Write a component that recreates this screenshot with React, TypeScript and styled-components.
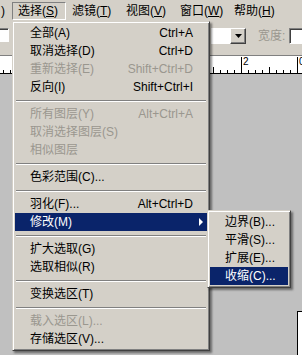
import React from 'react'
import styled, { createGlobalStyle } from 'styled-components'

const FONT = `"Liberation Sans", "Noto Sans CJK SC", sans-serif`

const GlobalStyle = createGlobalStyle`
  html, body {
    margin: 0;
    padding: 0;
  }
  body {
    background: #c0c0c0;
    font-family: ${FONT};
  }
`

const Screen = styled.div`
  position: relative;
  width: 302px;
  height: 355px;
  overflow: hidden;
  display: flex;
  flex-direction: column;
  background: #c0c0c0;
  font-family: ${FONT};
  font-size: 12px;
  color: #000;
`

const MenuBar = styled.div`
  height: 21px;
  flex: none;
  display: flex;
  align-items: center;
  background: #d4d0c8;
`

const MenuTail = styled.div`
  width: 12px;
  padding-left: 1px;
  box-sizing: border-box;
  line-height: 16px;
`

const MenuBarItem = styled.div<{ $pressed?: boolean }>`
  width: 54px;
  height: 18px;
  box-sizing: border-box;
  padding-left: 5px;
  line-height: 16px;
  white-space: nowrap;
  border: 1px solid transparent;
  ${(p) => p.$pressed && 'border-color: #808080 #fff #fff #808080;'}
`

const Mnemonic = styled.span`
  text-decoration: underline;
  text-underline-offset: 1px;
`

const OptionsBar = styled.div`
  height: 34px;
  flex: none;
  display: flex;
  align-items: flex-start;
  padding-top: 7px;
  box-sizing: border-box;
  background: #d4d0c8;
`

const Field = styled.div<{ $w: number }>`
  width: ${(p) => p.$w}px;
  height: 16px;
  box-sizing: border-box;
  flex: none;
  background: #fff;
  border: 1px solid;
  border-color: #808080 #fff #fff #808080;
  box-shadow: inset 1px 1px #404040;
`

const LeftField = styled(Field)`
  margin-left: -40px;
  height: 14px;
`

const Combo = styled.div`
  display: flex;
  margin-left: 202px;
  flex: none;
`

const ComboField = styled.div`
  width: 19px;
  height: 16px;
  background: #fff;
`

const ComboButton = styled.div`
  width: 16px;
  height: 16px;
  box-sizing: border-box;
  display: flex;
  align-items: center;
  justify-content: center;
  background: #d4d0c8;
  border: 1px solid;
  border-color: #fff #404040 #404040 #fff;
  box-shadow: inset -1px -1px #808080;
`

const OptionLabel = styled.div`
  margin-left: 12px;
  width: 31px;
  line-height: 16px;
  color: #9a978f;
  flex: none;
  white-space: nowrap;
`

const Ruler = styled.div`
  height: 19px;
  flex: none;
  background: #fff;
  border-top: 1px solid #808080;
  box-sizing: border-box;
`

const Workspace = styled.div`
  flex: 1;
  background: #c0c0c0;
  padding: 237px 0 0 297px;
  box-sizing: border-box;
  overflow: hidden;
`

const Canvas = styled.div`
  width: 40px;
  height: 60px;
  background: #fff;
  border: 1px solid #000;
`

const Menu = styled.div<{ $left: number; $top: number; $width: number }>`
  position: absolute;
  left: ${(p) => p.$left}px;
  top: ${(p) => p.$top}px;
  width: ${(p) => p.$width}px;
  box-sizing: border-box;
  padding: 2px;
  background: #d4d0c8;
  border: 1px solid;
  border-color: #d4d0c8 #404040 #404040 #d4d0c8;
  box-shadow: inset 1px 1px #fff, inset -1px -1px #808080, 2px 2px 2px rgba(0, 0, 0, 0.45);
`

const Item = styled.div<{ $disabled?: boolean; $active?: boolean }>`
  height: 18px;
  display: flex;
  align-items: center;
  justify-content: space-between;
  padding: 0 14px 0 15px;
  line-height: 18px;
  white-space: nowrap;
  color: ${(p) => (p.$active ? '#fff' : p.$disabled ? '#9a978f' : '#000')};
  background: ${(p) => (p.$active ? '#0a246a' : 'transparent')};
`

const Shortcut = styled.span``

const Arrow = styled.span`
  width: 0;
  height: 0;
  margin-right: -10px;
  border-top: 4px solid transparent;
  border-bottom: 4px solid transparent;
  border-left: 4px solid #fff;
`

const Separator = styled.div`
  height: 9px;
  display: flex;
  align-items: center;
  padding: 0 1px;
  &::after {
    content: '';
    flex: 1;
    border-top: 1px solid #808080;
    border-bottom: 1px solid #fff;
  }
`

type Entry =
  | 'sep'
  | { label: string; shortcut?: string; disabled?: boolean; active?: boolean; arrow?: boolean }

const mainMenu: Entry[] = [
  { label: '全部(A)', shortcut: 'Ctrl+A' },
  { label: '取消选择(D)', shortcut: 'Ctrl+D' },
  { label: '重新选择(E)', shortcut: 'Shift+Ctrl+D', disabled: true },
  { label: '反向(I)', shortcut: 'Shift+Ctrl+I' },
  'sep',
  { label: '所有图层(Y)', shortcut: 'Alt+Ctrl+A', disabled: true },
  { label: '取消选择图层(S)', disabled: true },
  { label: '相似图层', disabled: true },
  'sep',
  { label: '色彩范围(C)...' },
  'sep',
  { label: '羽化(F)...', shortcut: 'Alt+Ctrl+D' },
  { label: '修改(M)', active: true, arrow: true },
  'sep',
  { label: '扩大选取(G)' },
  { label: '选取相似(R)' },
  'sep',
  { label: '变换选区(T)' },
  'sep',
  { label: '载入选区(L)...', disabled: true },
  { label: '存储选区(V)...' },
]

const subMenu: Entry[] = [
  { label: '边界(B)...' },
  { label: '平滑(S)...' },
  { label: '扩展(E)...' },
  { label: '收缩(C)...', active: true },
]

const menuBar = [
  { name: '选择', key: 'S', pressed: true },
  { name: '滤镜', key: 'T' },
  { name: '视图', key: 'V' },
  { name: '窗口', key: 'W' },
  { name: '帮助', key: 'H' },
]

const MenuList: React.FC<{ entries: Entry[] }> = ({ entries }) => (
  <>
    {entries.map((e, i) =>
      e === 'sep' ? (
        <Separator key={i} />
      ) : (
        <Item key={i} $disabled={e.disabled} $active={e.active}>
          <span>{e.label}</span>
          {e.shortcut && <Shortcut>{e.shortcut}</Shortcut>}
          {e.arrow && <Arrow />}
        </Item>
      ),
    )}
  </>
)

const RulerTicks: React.FC = () => {
  const ticks: React.ReactElement[] = []
  for (let i = -40; i <= 8; i++) {
    const x = 241 + i * 7 + 0.5
    if (x < 0) continue
    const major = i % 8 === 0
    const mid = !major && i % 4 === 0
    const h = major ? 17 : mid ? 7 : 4
    ticks.push(<line key={i} x1={x} x2={x} y1={18 - h} y2={18} stroke="#000" strokeWidth={1} />)
  }
  return (
    <svg width="302" height="18" style={{ display: 'block' }}>
      <line x1="0" x2="302" y1="17.5" y2="17.5" stroke="#000" />
      {ticks}
      <text x="243" y="9" fontSize="10" fontFamily="Liberation Sans, sans-serif">2</text>
      <text x="299" y="9" fontSize="10" fontFamily="Liberation Sans, sans-serif">0</text>
    </svg>
  )
}

export default function App(): React.ReactElement {
  return (
    <Screen>
      <GlobalStyle />
      <MenuBar>
        <MenuTail>)</MenuTail>
        {menuBar.map((m) => (
          <MenuBarItem key={m.name} $pressed={m.pressed}>
            {m.name}(<Mnemonic>{m.key}</Mnemonic>)
          </MenuBarItem>
        ))}
      </MenuBar>
      <OptionsBar>
        <LeftField $w={49} />
        <Combo>
          <ComboField />
          <ComboButton>
            <svg width="7" height="4" viewBox="0 0 7 4">
              <path d="M0 0h7L3.5 4z" fill="#000" />
            </svg>
          </ComboButton>
        </Combo>
        <OptionLabel>宽度:</OptionLabel>
        <Field $w={20} />
      </OptionsBar>
      <Ruler>
        <RulerTicks />
      </Ruler>
      <Workspace>
        <Canvas />
      </Workspace>

      <Menu $left={12} $top={21} $width={198}>
        <MenuList entries={mainMenu} />
      </Menu>
      <Menu $left={207} $top={210} $width={84}>
        <MenuList entries={subMenu} />
      </Menu>
    </Screen>
  )
}
